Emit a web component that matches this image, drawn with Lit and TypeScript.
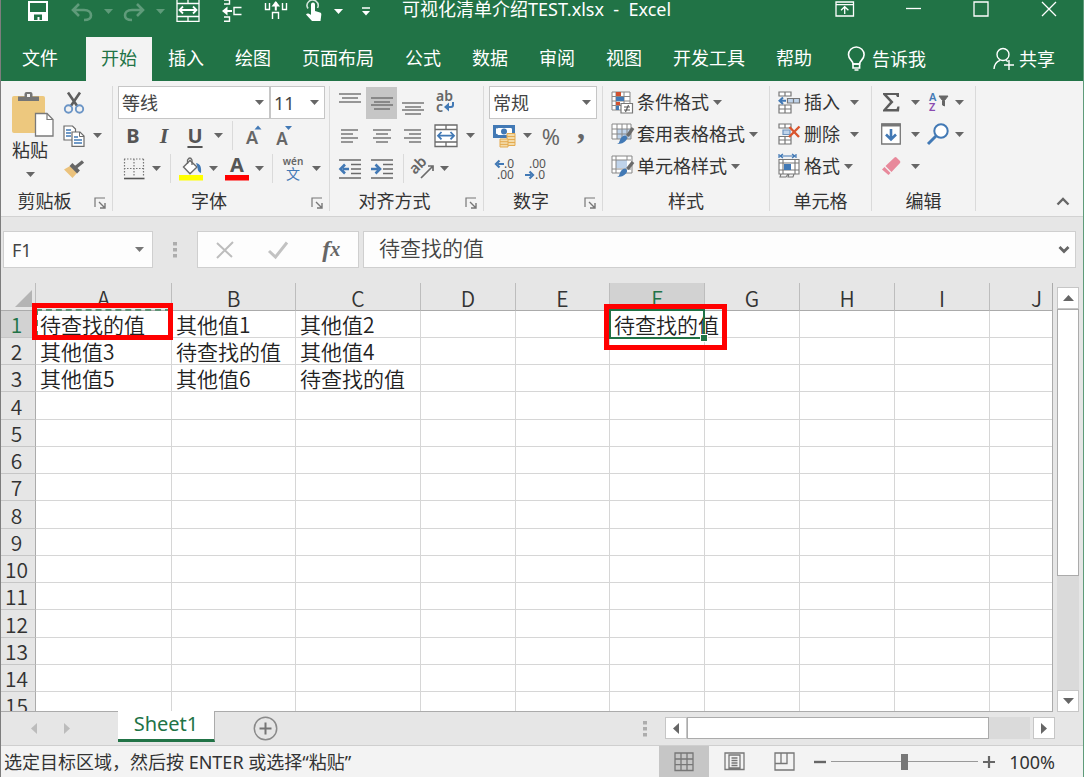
import { LitElement, html, svg, css, nothing } from "lit";
import { customElement, property, state } from "lit/decorators.js";
import { classMap } from "lit/directives/class-map.js";

const icon = (w: number, h: number, body: unknown) =>
  html`<svg class="ico" width=${w} height=${h} viewBox="0 0 ${w} ${h}" fill="none" aria-hidden="true">${body}</svg>`;

const caret = html`<svg class="ico" width="9" height="5" viewBox="0 0 9 5" aria-hidden="true"><path d="M0 0h9L4.5 5z" fill="currentColor"/></svg>`;

const lines = (rows: number[][]) =>
  icon(22, 22, svg`${rows.map(([x1, x2, y]) => svg`<path d="M${x1} ${y}H${x2}" stroke="#6e6e6e" stroke-width="1.4"/>`)}`);

const G = "#6b6b6b";
const B = "#4279b5";

const I = {
  save: icon(20, 20, svg`<path d="M1 1h18v18H1z" stroke="#fff" stroke-width="2"/><path d="M2 11h16v8H2z" fill="#fff"/><path d="M6 13.500h8V19h-2.500v-3h-2v3H6z" fill="#217346"/>`),
  undo: icon(22, 20, svg`<path d="M8 3L2 9l6 6M2.500 9H13c5 0 7 3 7 5.500S18 19 13 19" stroke="#5f9b7a" stroke-width="2.600"/>`),
  redo: icon(22, 20, svg`<path d="M14 3l6 6-6 6M19.500 9H9c-5 0-7 3-7 5.500S4 19 9 19" stroke="#5f9b7a" stroke-width="2.600"/>`),
  mergeW: icon(24, 22, svg`<path d="M1 0v21.300h22V0M1 3.500h22M1 16.500h22M12 0v3.500M12 16.500v5" stroke="#fff" stroke-width="1.300"/><path d="M4 10h16M7 6.500L3.500 10 7 13.500M17 6.500l3.500 3.500-3.500 3.500" stroke="#fff" stroke-width="1.800"/>`),
  insCells: icon(20, 22, svg`<path d="M2 0h5.500v4H2M2 17h5.500v4.300H2M19.500 7.500H12v7h7.500" stroke="#fff" stroke-width="1.400"/><path d="M1 11h9" stroke="#fff" stroke-width="2"/><path d="M5.500 6.500L0 11l5.500 4.500z" fill="#fff"/>`),
  insCols: icon(24, 22, svg`<path d="M1.500 3v6.500h4V3M18.500 3v6.500h4V3M8.500 19v-6.500h6V19" stroke="#fff" stroke-width="1.400"/><path d="M11.800 2v8.500" stroke="#fff" stroke-width="2"/><path d="M7.500 6.500L11.800 1l4.300 5.500z" fill="#fff"/>`),
  touch: icon(18, 22, svg`<path d="M3 8.500A5.500 5.500 0 1 1 12.500 8" stroke="#cfe3d8" stroke-width="1.600"/><path d="M6 4.500a2 2 0 0 1 4 0V11l5 1.500c1 .4 1.500 1.200 1.300 2.200L15.500 21H7L1 14.500c1-1.600 3-1.200 5 .5z" fill="#fff"/>`),
  custom: icon(8, 9, svg`<path d="M0 1h8" stroke="#fff" stroke-width="1.500"/><path d="M0 4h8L4 8.500z" fill="#fff"/>`),
  ribbonOpt: icon(20, 16, svg`<path d="M1 1h17.500v14H1zM1 3.700h17.500" stroke="#fff" stroke-width="1.300"/><path d="M9.700 13V6M6 9.300L9.700 5.700l3.700 3.600" stroke="#fff" stroke-width="1.300"/>`),
  min: icon(15, 16, svg`<path d="M0 7.500h15" stroke="#fff" stroke-width="1.300"/>`),
  max: icon(16, 16, svg`<path d="M1 1h14v14H1z" stroke="#fff" stroke-width="1.300"/>`),
  close: icon(16, 16, svg`<path d="M1 1l14 14M15 1L1 15" stroke="#fff" stroke-width="1.300"/>`),
  bulb: icon(19, 24, svg`<path d="M6 17c0-3.500-4.500-4.500-4.500-9.200a7.800 7.800 0 0 1 15.600 0c0 4.700-4.500 5.700-4.500 9.200z" stroke="#fff" stroke-width="1.600"/><path d="M6 17h6.600v4H6zM7.500 23h4" stroke="#fff" stroke-width="1.600"/>`),
  person: icon(22, 24, svg`<circle cx="10" cy="7.500" r="6" stroke="#fff" stroke-width="1.400"/><path d="M1 22c.3-4.500 2.500-7.500 6-8.700M13 13.300l2 1.200M16 13v10M11 18h10" stroke="#fff" stroke-width="1.400"/>`),
  paste: icon(48, 46, svg`<g transform="translate(6 0)"><path d="M2 5h29q2 0 2 2v33q0 2-2 2H2q-2 0-2-2V7q0-2 2-2z" fill="#edc87e"/><path d="M6 5.500h6.500V3q0-2 2-2h4q2 0 2 2v2.500H27V10H6z" fill="#757575"/><rect x="15" y="3" width="3" height="3" fill="#f3f3f3"/><path d="M23.500 22.500h11.500l6 6V45H23.500z" fill="#fff" stroke="#7a7a7a" stroke-width="1.300"/><path d="M35 22.500v6h6" stroke="#7a7a7a" stroke-width="1.200"/></g>`),
  cut: icon(20, 22, svg`<path d="M4 .5l9.500 14M16 .5L6.500 14.500" stroke="#5e5e5e" stroke-width="2.600"/><circle cx="4.500" cy="17" r="3.700" stroke="#6b95c6" stroke-width="1.900"/><circle cx="15.500" cy="17" r="3.700" stroke="#6b95c6" stroke-width="1.900"/>`),
  copy: icon(22, 22, svg`<path d="M1 1h8.500l3 3v11H1z" fill="#fff" stroke="${G}" stroke-width="1.200"/><path d="M3 5h5M3 8h5M3 11h5" stroke="${B}" stroke-width="1.300"/><path d="M9 7h8l4 4v10.300H9z" fill="#fff" stroke="${G}" stroke-width="1.200"/><path d="M16.500 7v4.500H21" stroke="${G}"/><path d="M11 12h4M11 15h8M11 18h8" stroke="${B}" stroke-width="1.300"/>`),
  brush: icon(22, 18, svg`<path d="M1 9.500L7 6l7 7-4.500 5z" fill="#ebc27c"/><path d="M8 4.500L15.500 12" stroke="#666" stroke-width="4"/><path d="M12.500 7.500L20 1.500" stroke="#666" stroke-width="3.500"/>`),
  borders: icon(22, 22, svg`<path d="M1.500 1v18M11 1v18M20.500 1v18M1 1h20M1 10.500h20" stroke="#777" stroke-width="1.200" stroke-dasharray="1.500 1.500"/><path d="M1 20.500h20.500" stroke="#555" stroke-width="1.600"/>`),
  bucket: icon(24, 24, svg`<path d="M4.500 10L11 3.500 18 10l-7 6.800z" fill="#fff" stroke="${G}" stroke-width="1.400"/><path d="M8.500 7V3q2.500-4 4.500 0v5" stroke="${G}" stroke-width="1.300"/><path d="M17 6c5 1 5.500 5 5 10-3-1-3.500-4-3.500-6z" fill="${B}"/><path d="M0 18h24v5.500H0z" fill="#ff0"/>`),
  fontColor: icon(24, 24, svg`<path d="M0 18h24v5.500H0z" fill="#f00"/><text x="12" y="15" text-anchor="middle" font-family="Noto Sans" font-weight="700" font-size="20" fill="#555">A</text>`),
  grow: icon(20, 22, svg`<text x="8" y="19" text-anchor="middle" font-family="Noto Sans" font-weight="600" font-size="18" fill="#666">A</text><path d="M10.500 4.500h7l-3.500-4z" fill="${B}"/>`),
  shrink: icon(20, 22, svg`<text x="7" y="20" text-anchor="middle" font-family="Noto Sans" font-weight="600" font-size="17" fill="#666">A</text><path d="M10 1h7l-3.500 4z" fill="${B}"/>`),
  pinyin: icon(22, 24, svg`<text x="11" y="8" text-anchor="middle" font-family="Noto Sans" font-size="10" font-weight="600" fill="#666">wén</text><text x="11" y="22" text-anchor="middle" font-family="Noto Sans CJK SC" font-size="14" fill="${B}">文</text>`),
  wrap: icon(22, 24, svg`<text x="1" y="10" font-family="Noto Sans" font-size="14" font-weight="600" fill="#666">ab</text><text x="1" y="21" font-family="Noto Sans" font-size="14" font-weight="600" fill="#666">c</text><path d="M18 11v3q0 2-2 2h-4" stroke="${B}" stroke-width="2"/><path d="M14 11.500L9 16l5 4.500z" fill="${B}"/>`),
  merge: icon(24, 24, svg`<path d="M1 1h22v21.500H1zM1 5.500h22M1 18h22M12 1v4.500M12 18v4.500" fill="#fff" stroke="${G}" stroke-width="1.300"/><path d="M4 11.700h16M7.500 8L4 11.700l3.500 3.700M16.500 8l3.500 3.700-3.500 3.700" stroke="${B}" stroke-width="1.800"/>`),
  outdent: icon(22, 20, svg`<path d="M0 1h22M12 5.500h10M12 10h10M12 14.500h10M0 19h22" stroke="${G}" stroke-width="1.400"/><path d="M4 10h6M6 5.500L1.500 10 6 14.500" stroke="${B}" stroke-width="2.600"/>`),
  indent: icon(22, 20, svg`<path d="M0 1h22M12 5.500h10M12 10h10M12 14.500h10M0 19h22" stroke="${G}" stroke-width="1.400"/><path d="M0 10h7M4.500 5.500L9 10l-4.500 4.500" stroke="${B}" stroke-width="2.600"/>`),
  orient: icon(24, 22, svg`<text x="3" y="15" transform="rotate(-45 6 15)" font-family="Noto Sans" font-size="15" font-weight="600" fill="#666">ab</text><path d="M10 20L22 8M17 8h5v5" stroke="${G}" stroke-width="1.700"/>`),
  currency: icon(24, 24, svg`<path d="M1 1h22v13H1z" fill="${B}"/><path d="M4 4q1 1 2 0h13q1 1 1 0v6q-1-1-1.500 1H6q-1-2-2-1z" fill="#fff"/><circle cx="12" cy="7.500" r="3" fill="${B}"/><g fill="#f3dba9" stroke="#e4ab50" stroke-width="1"><path d="M15 9.500h8v12h-8z"/><path d="M15 12.500h8M15 15.500h8M15 18.500h8"/><path d="M8 15h8v8H8z"/><path d="M8 17.700h8M8 20.400h8"/></g>`),
  decInc: icon(22, 22, svg`<text x="10" y="10" font-family="Noto Sans" font-size="12" fill="#555">.0</text><text x="3" y="21" font-family="Noto Sans" font-size="12" fill="#555">.00</text><path d="M4 6h6M5.500 2.500L2 6l3.500 3.500" stroke="${B}" stroke-width="2.200"/>`),
  decDec: icon(22, 22, svg`<text x="4" y="10" font-family="Noto Sans" font-size="12" fill="#555">.00</text><text x="10" y="21" font-family="Noto Sans" font-size="12" fill="#555">.0</text><path d="M0 17h6M4.500 13.500L8 17l-3.500 3.500" stroke="${B}" stroke-width="2.200"/>`),
  cond: icon(22, 23, svg`<path d="M1 1h18v18H1z" fill="#fff"/><path d="M1 1h18v18H1zM1 5.500h18M1 10h18M1 14.500h18M5 1v18M13 1v18" stroke="#888" stroke-width="1"/><path d="M5 1h5v4H5zM5 11h4v3H5z" fill="#d2512f"/><path d="M5 6h8v4H5zM5 15h3v4H5z" fill="${B}"/><path d="M10 12.500h11.500v9.500H10z" fill="#fff" stroke="#777" stroke-width="1.200"/><path d="M13 16h6M13 19h6M17.500 14l-3 7" stroke="#555" stroke-width="1.100"/>`),
  tableFmt: icon(22, 22, svg`<path d="M1 1h19v15H1z" fill="#fff"/><path d="M6 6h14v10H6z" fill="#bfd3ea"/><path d="M1 1h19v15H1zM1 6h19M1 11h19M6 1v15M11 1v15M16 1v15" stroke="#888"/><path d="M22 5l-5.500 8" stroke="${G}" stroke-width="3.400"/><path d="M14.500 12.500q3 2 .5 5-3 3.500-9 3.500 2.500-1 3-4 1.500-4.500 5.500-4.500z" fill="${B}"/>`),
  cellStyle: icon(22, 23, svg`<path d="M1 1h19v17H1z" fill="#fff"/><path d="M5 5h11v8H5z" fill="#bfd3ea"/><path d="M1 1h20v17H1zM1 5h19M1 14h19M5 1v17M16 1v4" stroke="#888"/><path d="M22 7l-5.500 7" stroke="${G}" stroke-width="3.400"/><path d="M14.500 13.500q3 2 .5 5-3 3.500-9 3.500 2.500-1 3-4 1.500-4.500 5.500-4.500z" fill="${B}"/>`),
  insert: icon(22, 23, svg`<path d="M1 1h12v4H1zM7 1v4M1 14h12v8H1zM7 14v8M1 18h12" fill="#fff" stroke="#777" stroke-width="1.200"/><path d="M9.500 7.500h12v4.500h-12zM15.500 7.500V12" fill="#bfd3ea" stroke="#777" stroke-width="1.200"/><path d="M3 9.800h5M5 6.500L1.500 9.800 5 13" stroke="${B}" stroke-width="2"/>`),
  del: icon(22, 22, svg`<path d="M1 1h12v4H1zM7 1v4M1 13.500h12V21H1zM7 14v7M1 17h12" fill="#fff" stroke="#777" stroke-width="1.200"/><path d="M5 7h7v4.500H5z" fill="#bfd3ea" stroke="#6f94be" stroke-width="1.200"/><path d="M11.500 4L21 14M21.500 3.500L11 14" stroke="#d9562f" stroke-width="2.400"/>`),
  format: icon(22, 24, svg`<path d="M1 5.500h20V20H1z" fill="#fff"/><path d="M1 5.500h20V20H1zM1 9h20M1 16h20M5 5.500V20M17 5.500V20M3 20l-1 3h6l2-3M11 20l-1 3h5l1-3" stroke="#777" stroke-width="1.100"/><path d="M6 10h7v6H6z" fill="${B}"/><path d="M1 0v4M18 0v4M2 2h15M5 0L2 2l3 2M14 0l3 2-3 2" stroke="${B}" stroke-width="1.200"/>`),
  sum: icon(18, 20, svg`<path d="M1 1h16v4h-2l-1-2H5l6.500 7L5 17h9.500l1-2.500h2L17 19.500H1V18l7-8-7-7.500z" fill="#5c5c5c"/>`),
  sort: icon(20, 20, svg`<text x="1" y="8.500" font-family="Noto Sans" font-size="11" font-weight="600" fill="${B}">A</text><text x="1" y="19" font-family="Noto Sans" font-size="11" font-weight="600" fill="#8a4bb0">Z</text><path d="M11 4h9l-3.500 4.500V14l-2-1V8.500z" fill="#666" stroke="#666"/>`),
  fill: icon(20, 22, svg`<path d="M.7 1h18.600v20H.7z" fill="#fff" stroke="#777" stroke-width="1.300"/><path d="M.5.500h19v3H.5z" fill="#777"/><path d="M10 6v10M5 11.500l5 5 5-5" stroke="${B}" stroke-width="2.600"/>`),
  find: icon(22, 22, svg`<circle cx="14" cy="8" r="6.700" fill="#fff" stroke="${B}" stroke-width="2"/><path d="M9 13L1 21" stroke="${B}" stroke-width="3"/>`),
  eraser: icon(20, 20, svg`<path d="M13.500 1.500q1-1 2 0l3.500 3.500q.7 1 0 2L10.500 16 4.500 10z" fill="#e8899b"/><path d="M3.500 11l6 6L7.500 19 1 13.500z" fill="#e8899b"/>`),
  launcher: icon(12, 12, svg`<path d="M1 10V1h10" stroke="#777" stroke-width="1.200"/><path d="M5 5l5.500 5.500M11 6v5H6" stroke="#777" stroke-width="1.400"/>`),
  up: icon(14, 9, svg`<path d="M1.500 7.500L7 2l5.500 5.500" stroke="#666" stroke-width="2.400"/>`),
  down: icon(12, 9, svg`<path d="M1.500 2L6 6.500 10.500 2" stroke="#666" stroke-width="2.800"/>`),
  cancel: icon(20, 18, svg`<path d="M2 2l15 14M18 1L2 17" stroke="#bdbdbd" stroke-width="2"/>`),
  check: icon(20, 18, svg`<path d="M1 10l6.500 6L19 1.500" stroke="#c2c2c2" stroke-width="3"/>`),
  dots: icon(4, 16, svg`<path d="M0 0h4v3.500H0zM0 6h4v3.500H0zM0 12h4v3.500H0z" fill="#adadad"/>`),
  left: icon(6, 11, svg`<path d="M6 0v11L0 5.500z" fill="currentColor"/>`),
  right: icon(6, 11, svg`<path d="M0 0v11l6-5.500z" fill="currentColor"/>`),
  triUp: icon(11, 6, svg`<path d="M0 6h11L5.500 0z" fill="#666"/>`),
  triDown: icon(11, 6, svg`<path d="M0 0h11L5.500 6z" fill="#666"/>`),
  plusCircle: icon(25, 25, svg`<circle cx="12.500" cy="12.500" r="11.200" stroke="#8a8a8a" stroke-width="1.500"/><path d="M12.500 6.500v12M6.500 12.500h12" stroke="#757575" stroke-width="2"/>`),
  corner: icon(17, 17, svg`<path d="M17 0v17H0z" fill="#b4b4b4"/>`),
  normal: icon(20, 20, svg`<path d="M1 1h18v17.500H1zM1 7h18M1 12.700h18M7 1v17.500M13 1v17.500" stroke="#777" stroke-width="1.300"/>`),
  page: icon(21, 19, svg`<path d="M1 1h19v16.500H1zM5 3h11v13H5zM7.500 6h6M7.500 8.500h6M7.500 11h6M7.500 13.500h6" stroke="#777" stroke-width="1.300"/>`),
  breaks: icon(21, 19, svg`<path d="M1 1h19v17H1zM1 11.500h12V1M7 1v10.500" stroke="#777" stroke-width="1.300"/>`),
  minus: icon(12, 12, svg`<path d="M0 6h12" stroke="#666" stroke-width="2.400"/>`),
  plus: icon(12, 12, svg`<path d="M0 6h12M6 0v12" stroke="#666" stroke-width="2.200"/>`),
};

const base = css`
  :host {
    font-family: "Noto Sans", "Noto Sans CJK SC", sans-serif;
    font-size: 18px;
    line-height: 24px;
    color: #333;
  }
  * { box-sizing: border-box; }
  button, input, select {
    font: inherit;
    color: inherit;
    margin: 0;
    padding: 0;
    border: 0;
    border-radius: 0;
    background: none;
  }
  button {
    display: inline-flex;
    align-items: center;
    justify-content: center;
    white-space: nowrap;
  }
  .ico { display: block; flex: none; overflow: visible; }
`;

@customElement("title-bar")
class TitleBar extends LitElement {
  static styles = [base, css`
    :host { display: block; color: #fff; }
    .bar { display: flex; height: 22px; padding-left: 13px; }
    .bar button { height: 22px; flex: none; }
    .w12 { width: 12px; }
    .w16 { width: 16px; }
    .w32 { width: 32px; }
    .w40 { width: 40px; }
    .w44 { width: 44px; }
    .w48 { width: 48px; }
    .dim { color: #5f9b7a; }
    .title { flex: 1; padding-left: 16px; line-height: 18px; white-space: nowrap; }
    .win { width: 68px; padding-bottom: 4px; }
  `];
  render() {
    return html`
      <div class="bar">
        <button class="w48" aria-label="保存">${I.save}</button>
        <button class="w40" aria-label="撤消">${I.undo}</button>
        <button class="w12 dim" aria-label="撤消列表">${caret}</button>
        <button class="w40" aria-label="恢复">${I.redo}</button>
        <button class="w12 dim" aria-label="恢复列表">${caret}</button>
        <button class="w44" aria-label="合并单元格">${I.mergeW}</button>
        <button class="w44" aria-label="插入单元格">${I.insCells}</button>
        <button class="w44" aria-label="插入列">${I.insCols}</button>
        <button class="w32" aria-label="触摸模式">${I.touch}</button>
        <button class="w16" aria-label="模式列表">${caret}</button>
        <button class="w40" aria-label="自定义">${I.custom}</button>
        <div class="title">可视化清单介绍TEST.xlsx&nbsp; -&nbsp; Excel</div>
        <button class="win" aria-label="功能区选项">${I.ribbonOpt}</button>
        <button class="win" aria-label="最小化">${I.min}</button>
        <button class="win" aria-label="最大化">${I.max}</button>
        <button class="win" aria-label="关闭">${I.close}</button>
      </div>`;
  }
}

@customElement("ribbon-tabs")
class RibbonTabs extends LitElement {
  static styles = [base, css`
    :host { display: block; color: #fff; }
    .tabs { display: flex; gap: 1px; height: 44px; padding: 0 28px 0 6px; }
    .tabs button { padding: 0 15px 2px; }
    .tabs .active { background: #f3f3f3; color: #217346; }
    .tabs .file { margin-right: 12px; }
    .tabs .tell, .tabs .share { gap: 6px; padding-right: 0; padding-bottom: 0; }
    .tabs .tell { padding-left: 19px; }
    .tabs .share { margin-left: auto; gap: 4px; }
  `];
  @state() private active = "开始";
  private names = ["文件", "开始", "插入", "绘图", "页面布局", "公式", "数据", "审阅", "视图", "开发工具", "帮助"];
  render() {
    return html`
      <nav class="tabs">
        ${this.names.map((n) => html`<button
          class=${classMap({ active: n === this.active, file: n === "文件" })}
          @click=${() => (this.active = n)}>${n}</button>`)}
        <button class="tell">${I.bulb}<span>告诉我</span></button>
        <button class="share">${I.person}<span>共享</span></button>
      </nav>`;
  }
}

@customElement("ribbon-group")
class RibbonGroup extends LitElement {
  static styles = [base, css`
    :host { display: flex; flex-direction: column; border-right: 1px solid #dadada; }
    .body { flex: 1; }
    .foot { display: flex; height: 23px; }
    .name { flex: 1; text-align: center; line-height: 26px; }
    .foot button { width: 24px; padding-top: 6px; }
  `];
  @property() label = "";
  @property({ type: Boolean }) launcher = false;
  render() {
    return html`
      <div class="body"><slot></slot></div>
      <div class="foot">
        <div class="name">${this.label}</div>
        ${this.launcher ? html`<button aria-label="${this.label}设置">${I.launcher}</button>` : nothing}
      </div>`;
  }
}

@customElement("ribbon-panel")
class RibbonPanel extends LitElement {
  static styles = [base, css`
    :host { display: block; }
    .ribbon { display: flex; background: #f3f3f3; height: 136px; padding: 5px 0; border-bottom: 1px solid #d2d2d2; }
    ribbon-group { flex: none; }
    .clip { width: 112px; }
    .font { width: 217px; }
    .align { width: 154px; }
    .number { width: 119px; }
    .styles { width: 167px; }
    .cells { width: 102px; }
    .edit { width: 104px; }
    .row, .clipgrid { color: #666; }
    .row { display: grid; height: 33px; align-items: center; justify-items: center; justify-content: start; }
    .row > button { width: 100%; height: 32px; }
    .sep { width: 1px; height: 29px; background: #dadada; }
    .pad5 { padding-left: 5px; }
    .pad3 { padding-left: 4px; }
    .clipgrid { display: grid; grid-template-columns: 58px 30px 16px; }
    .paste { flex-direction: column; justify-content: flex-start; gap: 1px; padding-top: 5px; color: #333; }
    .paste .ico:last-child { margin-top: 9px; color: #666; }
    .stack { display: grid; grid-template-rows: repeat(3, 33px); }
    .box { display: grid; height: 33px; width: 100%; background: #fff; border: 1px solid #c6c6c6; align-items: center; color: #444; }
    .box select { grid-area: 1 / 1; width: 100%; height: 31px; padding-left: 3px; appearance: none; color: #444; }
    .box .ico { grid-area: 1 / 1; justify-self: end; margin-right: 5px; pointer-events: none; color: #666; }
    .f1 { grid-template-columns: 152px 55px; }
    .f2 { grid-template-columns: 30px 32px 30px 16px 12px 32px 30px; }
    .f3 { grid-template-columns: 31px 14px 14px 28px 16px 32px 13px 13px 28px 18px; }
    .a1 { grid-template-columns: 32px 31px 31px 36px 12px; }
    .a3 { grid-template-columns: 32px 31px 12px 28px 14px; }
    .n1 { grid-template-columns: 108px; }
    .n2 { grid-template-columns: 30px 16px 32px 28px; }
    .n3 { grid-template-columns: 32px 30px; }
    .e1 { grid-template-columns: 28px 20px 26px 16px; height: 32px; }
    .on { background: #c6c6c6; }
    .bold { font-weight: 700; font-size: 20px; color: #555; }
    .ital { font: italic 700 22px "Liberation Serif", serif; color: #555; }
    .under { font-weight: 700; text-decoration: underline; text-underline-offset: 3px; color: #555; }
    .pct { font-size: 22px; }
    .comma { font: 700 32px "Liberation Serif", serif; padding-bottom: 14px; }
    .list { display: flex; flex-direction: column; align-items: flex-start; padding-left: 8px; }
    .list button { height: 32px; gap: 4px; color: #333; }
    .list button .ico:last-child { color: #666; }
    .list .wide .ico:last-child { margin-left: 6px; }
    .collapse { margin-left: auto; align-self: flex-end; width: 40px; height: 20px; }
  `];
  render() {
    const btn = (label: string, body: unknown, cls = "") => html`<button class=${cls} aria-label=${label}>${body}</button>`;
    const sep = html`<span class="sep"></span>`;
    const drop = (label: string, value: string) =>
      html`<div class="box"><select aria-label=${label}><option>${value}</option></select>${caret}</div>`;
    return html`
      <div class="ribbon">
        <ribbon-group class="clip" label="剪贴板" launcher>
          <div class="clipgrid">
            <button class="paste">${I.paste}<span>粘贴</span>${caret}</button>
            <div class="stack">${btn("剪切", I.cut)}${btn("复制", I.copy)}${btn("格式刷", I.brush)}</div>
            <div class="stack"><span></span>${btn("复制选项", caret)}</div>
          </div>
        </ribbon-group>
        <ribbon-group class="font" label="字体" launcher>
          <div class="pad5">
            <div class="row f1">${drop("字体名称", "等线")}${drop("字号", "11")}</div>
            <div class="row f2">
              ${btn("加粗", "B", "bold")}${btn("倾斜", "I", "ital")}${btn("下划线", "U", "under bold")}${btn("下划线选项", caret)}${sep}
              ${btn("增大字号", I.grow)}${btn("减小字号", I.shrink)}
            </div>
            <div class="row f3">
              ${btn("边框", I.borders)}${btn("边框选项", caret)}${sep}${btn("填充颜色", I.bucket)}${btn("填充选项", caret)}
              ${btn("字体颜色", I.fontColor)}${btn("颜色选项", caret)}${sep}${btn("拼音", I.pinyin)}${btn("拼音选项", caret)}
            </div>
          </div>
        </ribbon-group>
        <ribbon-group class="align" label="对齐方式" launcher>
          <div class="pad3">
            <div class="row a1">
              ${btn("顶端对齐", lines([[0, 22, 2], [3, 19, 6], [0, 22, 10]]))}
              ${btn("垂直居中", lines([[0, 22, 6], [3, 19, 10], [0, 22, 13], [3, 19, 17]]), "on")}
              ${btn("底端对齐", lines([[0, 22, 11], [3, 19, 15], [0, 22, 18], [3, 19, 22]]))}
              ${btn("自动换行", I.wrap)}
            </div>
            <div class="row a1">
              ${btn("左对齐", lines([[2, 19, 5], [2, 14, 9], [2, 19, 13], [2, 14, 17]]))}
              ${btn("居中", lines([[2, 20, 5], [5, 17, 9], [2, 20, 13], [5, 17, 17]]))}
              ${btn("右对齐", lines([[2, 19, 5], [7, 19, 9], [2, 19, 13], [7, 19, 17]]))}
              ${btn("合并后居中", I.merge)}${btn("合并选项", caret)}
            </div>
            <div class="row a3">
              ${btn("减少缩进", I.outdent)}${btn("增加缩进", I.indent)}${sep}${btn("方向", I.orient)}${btn("方向选项", caret)}
            </div>
          </div>
        </ribbon-group>
        <ribbon-group class="number" label="数字" launcher>
          <div class="pad5">
            <div class="row n1">${drop("数字格式", "常规")}</div>
            <div class="row n2">${btn("会计格式", I.currency)}${btn("会计选项", caret)}${btn("百分比", "%", "pct")}${btn("千位分隔", ",", "comma")}</div>
            <div class="row n3">${btn("增加小数位", I.decInc)}${btn("减少小数位", I.decDec)}</div>
          </div>
        </ribbon-group>
        <ribbon-group class="styles" label="样式">
          <div class="list">
            <button>${I.cond}<span>条件格式</span>${caret}</button>
            <button>${I.tableFmt}<span>套用表格格式</span>${caret}</button>
            <button>${I.cellStyle}<span>单元格样式</span>${caret}</button>
          </div>
        </ribbon-group>
        <ribbon-group class="cells" label="单元格">
          <div class="list">
            <button class="wide">${I.insert}<span>插入</span>${caret}</button>
            <button class="wide">${I.del}<span>删除</span>${caret}</button>
            <button>${I.format}<span>格式</span>${caret}</button>
          </div>
        </ribbon-group>
        <ribbon-group class="edit" label="编辑">
          <div class="pad5">
            <div class="row e1">${btn("求和", I.sum)}${btn("求和选项", caret)}${btn("排序和筛选", I.sort)}${btn("排序选项", caret)}</div>
            <div class="row e1">${btn("填充", I.fill)}${btn("填充选项", caret)}${btn("查找", I.find)}${btn("查找选项", caret)}</div>
            <div class="row e1">${btn("清除", I.eraser)}${btn("清除选项", caret)}</div>
          </div>
        </ribbon-group>
        <button class="collapse" aria-label="折叠功能区">${I.up}</button>
      </div>`;
  }
}

@customElement("formula-bar")
class FormulaBar extends LitElement {
  static styles = [base, css`
    :host { display: block; }
    .bar { display: flex; padding: 14px 7px 15px 2px; color: #777; }
    .field { display: flex; align-items: center; height: 37px; background: #fdfdfd; border: 1px solid #cfcfcf; }
    .name { width: 150px; padding: 0 8px; }
    .name input { flex: 1; min-width: 0; color: #444; }
    .grip { display: flex; width: 44px; align-items: center; justify-content: center; }
    .actions { width: 162px; }
    .actions button { flex: 1; height: 35px; }
    .fx { font: italic 700 24px "Liberation Serif", serif; color: #666; }
    .sub { font-size: 20px; }
    .formula { flex: 1; margin-left: 4px; padding: 0 5px 0 15px; }
    .formula input { flex: 1; min-width: 0; font-size: 21px; height: 35px; padding-bottom: 5px; font-family: "Noto Sans CJK SC", sans-serif; font-weight: 350; color: #444; }
  `];
  @property() cell = "";
  @property() value = "";
  render() {
    return html`
      <div class="bar">
        <div class="field name"><input aria-label="名称框" .value=${this.cell}>${caret}</div>
        <div class="grip">${I.dots}</div>
        <div class="field actions">
          <button aria-label="取消">${I.cancel}</button>
          <button aria-label="输入">${I.check}</button>
          <button class="fx" aria-label="插入函数">f<span class="sub">x</span></button>
        </div>
        <div class="field formula"><input aria-label="编辑栏" .value=${this.value}>${I.down}</div>
      </div>`;
  }
}

@customElement("sheet-grid")
class SheetGrid extends LitElement {
  static styles = [base, css`
    :host { display: flex; min-height: 0; font-family: "Noto Sans CJK SC", sans-serif; font-size: 21px; }
    .view { flex: 1; min-width: 0; overflow: hidden; border-right: 1px solid #ababab; border-bottom: 1px solid #ababab; }
    table { table-layout: fixed; border-collapse: separate; border-spacing: 0; width: 1083px; background: #fff; }
    tbody tr { height: 27px; }
    tbody tr:nth-child(4n) { height: 28px; }
    th, td { padding: 0; border-right: 1px solid #d6d6d6; border-bottom: 1px solid #d6d6d6; line-height: 24px; font-weight: 350; white-space: nowrap; text-align: left; }
    td { padding: 0 0 1px 4px; color: #222; position: relative; }
    th { background: #e6e6e6; text-align: center; color: #333; }
    thead th { height: 28px; border-right-color: #bdbdbd; border-bottom-color: #ababab; padding-top: 3px; }
    tbody th { border-right-color: #ababab; border-bottom-color: #c6c6c6; padding-right: 3px; }
    thead .current, tbody .current { background: #d2d2d2; color: #217346; }
    .corner .ico { margin-left: 14px; }
    .select { position: absolute; z-index: 1; inset: -2px -1px -2px -1px; border: 2px solid #217346; pointer-events: none; }
    .select::after { content: ""; position: absolute; right: -4px; bottom: -4px; width: 6px; height: 6px; background: #217346; outline: 1px solid #fff; }
    .ants { position: absolute; inset: -2px 0 0 0; border: 2px dashed #5c9274; pointer-events: none; }
    .mark { position: absolute; z-index: 2; border: 5px solid #f00; pointer-events: none; }
    .mark-a { inset: -8px -2px -3px -4px; }
    .mark-f { inset: -7px -23px -13px -6px; }
    .scroll { display: flex; flex-direction: column; width: 30px; padding: 4px 4px 0; }
    .scroll button { height: 22px; width: 22px; background: #fff; border: 1px solid #c6c6c6; }
    .track { flex: 1; width: 22px; background: #dadada; }
    .thumb { height: 70%; background: #fff; border: 1px solid #ababab; }
  `];
  private cols: [string, number][] = [["A", 136], ["B", 124], ["C", 125], ["D", 95], ["E", 94], ["F", 95], ["G", 95], ["H", 95], ["I", 95], ["J", 94]];
  private data: Record<string, string> = {
    A1: "待查找的值", B1: "其他值1", C1: "其他值2", F1: "待查找的值",
    A2: "其他值3", B2: "待查找的值", C2: "其他值4",
    A3: "其他值5", B3: "其他值6", C3: "待查找的值",
  };
  private overlay(ref: string) {
    if (ref === "A1") return html`<span class="ants"></span><span class="mark mark-a"></span>`;
    if (ref === "F1") return html`<span class="select"></span><span class="mark mark-f"></span>`;
    return nothing;
  }
  render() {
    return html`
      <div class="view">
        <table>
          <colgroup><col width="35">${this.cols.map(([, w]) => html`<col width=${w}>`)}</colgroup>
          <thead><tr>
            <th class="corner">${I.corner}</th>
            ${this.cols.map(([c]) => html`<th class=${classMap({ current: c === "F" })}>${c}</th>`)}
          </tr></thead>
          <tbody>
            ${Array.from({ length: 15 }, (_, i) => i + 1).map((r) => html`<tr>
              <th class=${classMap({ current: r === 1 })}>${r}</th>
              ${this.cols.map(([c]) => html`<td>${this.data[c + r] ?? ""}${this.overlay(c + r)}</td>`)}
            </tr>`)}
          </tbody>
        </table>
      </div>
      <div class="scroll">
        <button aria-label="向上滚动">${I.triUp}</button>
        <div class="track"><div class="thumb"></div></div>
        <button aria-label="向下滚动">${I.triDown}</button>
      </div>`;
  }
}

@customElement("sheet-tabs")
class SheetTabs extends LitElement {
  static styles = [base, css`
    :host { display: block; }
    .bar { display: flex; height: 33px; padding-right: 28px; color: #bcbcbc; }
    .nav { display: flex; width: 117px; padding: 0 35px 0 16px; }
    .nav button { flex: 1; }
    .tab { width: 97px; height: 31px; margin-top: -1px; background: #fff; border-right: 1px solid #ababab; border-bottom: 3px solid #217346; color: #217346; font-size: 20px; z-index: 1; padding-bottom: 2px; }
    .add { margin-left: 38px; }
    .grip { margin-left: auto; display: flex; align-items: center; padding-right: 18px; }
    .scroll { display: flex; width: 37%; height: 22px; margin-top: 5px; color: #666; }
    .scroll button { width: 22px; background: #fff; border: 1px solid #c6c6c6; }
    .track { flex: 1; margin-right: 3px; background: #dadada; }
    .thumb { width: 88%; height: 22px; background: #fff; border: 1px solid #ababab; }
  `];
  render() {
    return html`
      <div class="bar">
        <div class="nav"><button aria-label="上一个">${I.left}</button><button aria-label="下一个">${I.right}</button></div>
        <button class="tab">Sheet1</button>
        <button class="add" aria-label="新工作表">${I.plusCircle}</button>
        <div class="grip">${I.dots}</div>
        <div class="scroll">
          <button aria-label="向左滚动">${I.left}</button>
          <div class="track"><div class="thumb"></div></div>
          <button aria-label="向右滚动">${I.right}</button>
        </div>
      </div>`;
  }
}

@customElement("status-bar")
class StatusBar extends LitElement {
  static styles = [base, css`
    :host { display: block; }
    .bar { display: flex; height: 32px; align-items: center; background: #f3f3f3; border-top: 1px solid #cfcfcf; padding: 0 28px 0 3px; }
    .msg { flex: 1; white-space: nowrap; }
    .view { width: 50px; height: 31px; }
    .on { background: #c6c6c6; }
    .zoom { display: flex; align-items: center; gap: 5px; padding-left: 5px; }
    .zoom input { appearance: none; width: 147px; height: 16px; background: linear-gradient(#999, #999) center / 100% 1px no-repeat; }
    .zoom input::-webkit-slider-thumb { appearance: none; width: 7px; height: 16px; background: #777; }
    .pct { width: 60px; text-align: right; }
  `];
  render() {
    return html`
      <div class="bar">
        <div class="msg">选定目标区域，然后按 ENTER 或选择“粘贴”</div>
        <button class="view on" aria-label="普通">${I.normal}</button>
        <button class="view" aria-label="页面布局">${I.page}</button>
        <button class="view" aria-label="分页预览">${I.breaks}</button>
        <div class="zoom">
          <button aria-label="缩小">${I.minus}</button>
          <input type="range" aria-label="缩放" min="0" max="200" value="100">
          <button aria-label="放大">${I.plus}</button>
        </div>
        <div class="pct">100%</div>
      </div>`;
  }
}

@customElement("app-root")
class AppRoot extends LitElement {
  static styles = css`
    :host { display: block; }
    .app { box-sizing: border-box; display: flex; flex-direction: column; height: 100vh; overflow: hidden; background: #e6e6e6; border-left: 1px solid #7d7d7d; border-right: 1px solid #5f9b7a; }
    .head { background: #217346; display: flex; flex-direction: column; gap: 15px; }
    .grid { flex: 1; }
  `;
  render() {
    return html`
      <div class="app">
        <div class="head"><title-bar></title-bar><ribbon-tabs></ribbon-tabs></div>
        <ribbon-panel></ribbon-panel>
        <formula-bar cell="F1" value="待查找的值"></formula-bar>
        <sheet-grid class="grid"></sheet-grid>
        <sheet-tabs></sheet-tabs>
        <status-bar></status-bar>
      </div>`;
  }
}
